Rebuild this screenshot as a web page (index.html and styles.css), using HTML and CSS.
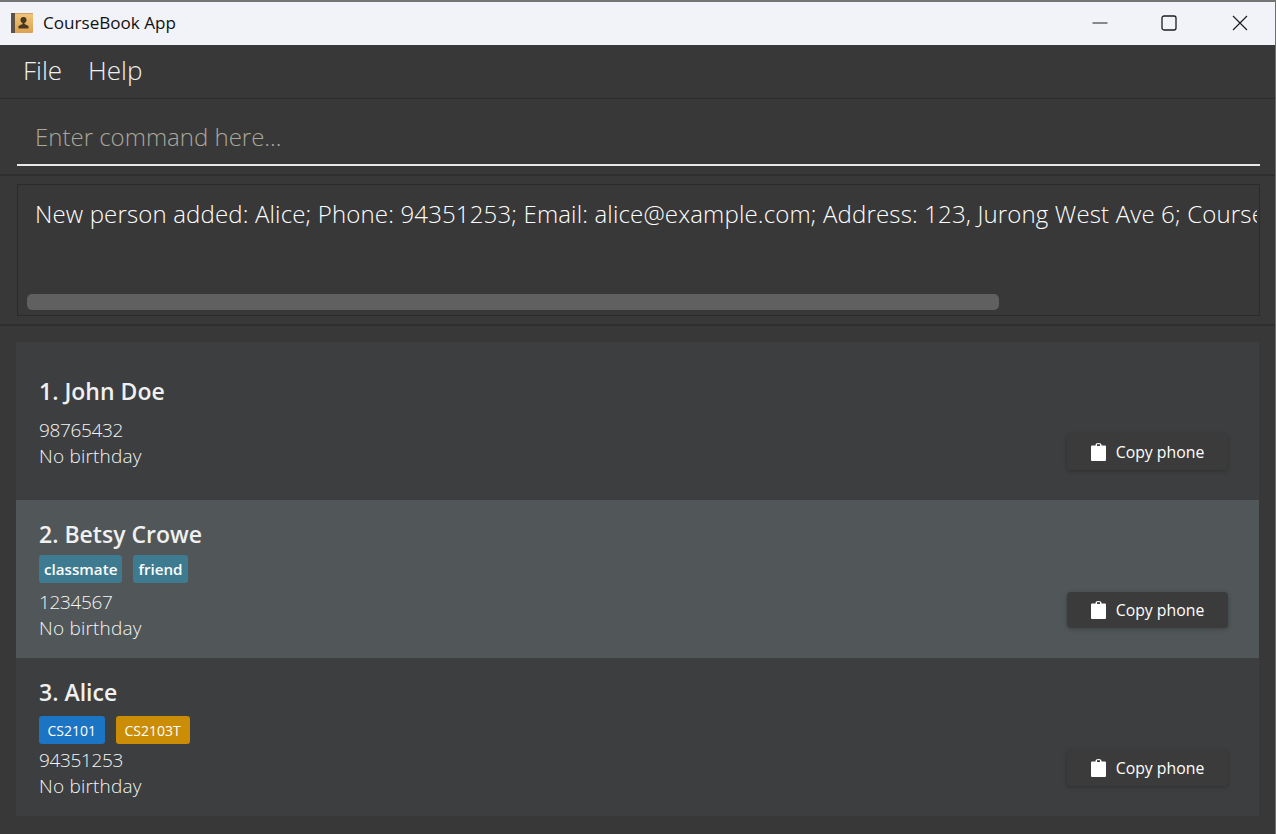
FILE: index.html
```html
<!DOCTYPE html>
<html lang="en">
    <head>
        <meta charset="UTF-8" />
        <title>CourseBook App</title>
        <link rel="stylesheet" href="styles.css">
    </head>
    <body>
        <div class="window">
            <div class="title-bar">
                <svg class="app-icon" width="22" height="22" viewBox="0 0 22 22">
                    <defs>
                        <linearGradient id="bookFill" x1="0" y1="0" x2="0" y2="1">
                            <stop offset="0" stop-color="#f0c67c" />
                            <stop offset="1" stop-color="#dba24f" />
                        </linearGradient>
                    </defs>
                    <rect x="0" y="1" width="22" height="20" rx="1" fill="url(#bookFill)" />
                    <rect x="0" y="1" width="4" height="20" fill="#5f5244" />
                    <rect x="4" y="1" width="18" height="1" fill="#c9a066" />
                    <circle cx="12.500" cy="8" r="3" fill="#4a3720" />
                    <path d="M11.500 10h2v2l4 2v2.500h-10V14l4-2z" fill="#4a3720" />
                </svg>
                <span class="app-title">CourseBook App</span>
                <div class="window-buttons">
                    <svg width="16" height="16" viewBox="0 0 16 16"><path d="M0.5 8h15" stroke="#1c1c1c" fill="none" /></svg>
                    <svg width="16" height="16" viewBox="0 0 16 16"><rect x="1" y="1" width="14" height="14" rx="2" stroke="#1c1c1c" stroke-width="1.3" fill="none" /></svg>
                    <svg class="close-icon" width="16" height="16" viewBox="0 0 16 16"><path d="M1 1l14 14M15 1L1 15" stroke="#1c1c1c" stroke-width="1.2" fill="none" /></svg>
                </div>
            </div>

            <div class="menu-bar">
                <span>File</span>
                <span>Help</span>
            </div>

            <div class="command-section">
                <div class="command-box">Enter command here...</div>
            </div>

            <div class="result-section">
                <div class="result-box">
                    <div class="result-text">New person added: Alice; Phone: 94351253; Email: alice@example.com; Address: 123, Jurong West Ave 6; Courses: CS2101, CS2103T</div>
                    <div class="scroll-thumb"></div>
                </div>
            </div>

            <div class="list-section">
                <div class="person-card">
                    <div class="person-info">
                        <div class="person-name no-tags">1. John Doe</div>
                        <div class="person-line person-phone">98765432</div>
                        <div class="person-line">No birthday</div>
                    </div>
                    <button class="copy-button">
                        <svg width="15" height="18" viewBox="0 0 15 18"><path d="M1 2.500H4.500V2a3 2 0 0 1 6 0v.5H14a1 1 0 0 1 1 1V17a1 1 0 0 1-1 1H1a1 1 0 0 1-1-1V3.500a1 1 0 0 1 1-1z" fill="#fff" /><rect x="6" y="1.200" width="3" height="1.800" fill="#3b3b3b" /></svg>
                        Copy phone
                    </button>
                </div>
                <div class="person-card selected">
                    <div class="person-info">
                        <div class="person-name">2. Betsy Crowe</div>
                        <div class="tags">
                            <span class="tag tag-plain">classmate</span>
                            <span class="tag tag-plain">friend</span>
                        </div>
                        <div class="person-line person-phone">1234567</div>
                        <div class="person-line">No birthday</div>
                    </div>
                    <button class="copy-button">
                        <svg width="15" height="18" viewBox="0 0 15 18"><path d="M1 2.500H4.500V2a3 2 0 0 1 6 0v.5H14a1 1 0 0 1 1 1V17a1 1 0 0 1-1 1H1a1 1 0 0 1-1-1V3.500a1 1 0 0 1 1-1z" fill="#fff" /><rect x="6" y="1.200" width="3" height="1.800" fill="#3b3b3b" /></svg>
                        Copy phone
                    </button>
                </div>
                <div class="person-card">
                    <div class="person-info">
                        <div class="person-name">3. Alice</div>
                        <div class="tags tags-course">
                            <span class="tag tag-blue">CS2101</span>
                            <span class="tag tag-gold">CS2103T</span>
                        </div>
                        <div class="person-line person-phone">94351253</div>
                        <div class="person-line">No birthday</div>
                    </div>
                    <button class="copy-button">
                        <svg width="15" height="18" viewBox="0 0 15 18"><path d="M1 2.500H4.500V2a3 2 0 0 1 6 0v.5H14a1 1 0 0 1 1 1V17a1 1 0 0 1-1 1H1a1 1 0 0 1-1-1V3.500a1 1 0 0 1 1-1z" fill="#fff" /><rect x="6" y="1.200" width="3" height="1.800" fill="#3b3b3b" /></svg>
                        Copy phone
                    </button>
                </div>
            </div>
        </div>
    </body>
</html>
```

FILE: styles.css
```css
* {
    box-sizing: border-box;
    font-family: "Open Sans", "Noto Sans", sans-serif;
}
html,
body {
    margin: 0;
    height: 100%;
    overflow: hidden;
}
.window {
    height: 834px;
    display: flex;
    flex-direction: column;
    background-color: #383838;
    border-right: 1px solid #6f6f6f;
}
.title-bar {
    height: 45px;
    flex: none;
    display: flex;
    align-items: center;
    padding-left: 11px;
    padding-bottom: 2px;
    background-color: #f2f3f9;
    border-top: 2px solid #757575;
}
.app-icon {
    margin-right: 10px;
}
.app-title {
    font-size: 17.100px;
    color: #111;
}
.window-buttons {
    margin-left: auto;
    display: flex;
    gap: 53px;
    padding-right: 27px;
}
.close-icon {
    margin-left: 2px;
}
.menu-bar {
    height: 54px;
    flex: none;
    display: flex;
    align-items: center;
    gap: 26px;
    padding-left: 23px;
    padding-bottom: 4px;
    font-size: 26px;
    font-weight: 300;
    color: #f0f0f0;
    border-bottom: 1px solid #2c2c2c;
}
.command-section {
    height: 77px;
    flex: none;
    padding: 0 15px 0 17px;
    border-bottom: 2px solid #2e2e2e;
}
.command-box {
    height: 67px;
    padding: 21px 0 0 18px;
    font-size: 24px;
    font-weight: 300;
    color: #aaa79b;
    border-bottom: 2px solid #e8e8e8;
}
.result-section {
    height: 150px;
    flex: none;
    padding: 8px 15px 0 17px;
    border-bottom: 2px solid #2e2e2e;
}
.result-box {
    position: relative;
    height: 132px;
    padding: 12px 2px 0 17px;
    overflow: hidden;
    border: 1px solid #2b2b2b;
}
.result-text {
    font-size: 24px;
    letter-spacing: 0.15px;
    font-weight: 300;
    color: #fff;
    white-space: nowrap;
    overflow: hidden;
}
/* Scrollbar thumb sits over the text area */
.scroll-thumb {
    position: absolute;
    left: 9px;
    top: 109px;
    width: 972px;
    height: 16px;
    border-radius: 5px;
    background-color: #606060;
}
.list-section {
    padding: 16px 16px 0;
}
.person-card {
    height: 158px;
    padding: 3px 31px 0 23px;
    display: flex;
    justify-content: space-between;
    background-color: #3c3e3f;
}
.person-card.selected {
    background-color: #515658;
}
.person-info {
    display: flex;
    flex-direction: column;
    justify-content: center;
}
.person-name {
    height: 31px;
    font-size: 23px;
    line-height: 29px;
    font-weight: 600;
    color: #f0f0f0;
}
.person-name.no-tags {
    margin-bottom: 9px;
}
.tags {
    display: flex;
    gap: 11px;
    height: 28px;
    margin: 4px 0 6px;
}
.tags-course {
    margin: 7px 0 3px;
}
.tag {
    height: 28px;
    padding: 0 5px;
    display: flex;
    align-items: center;
    border-radius: 3px;
    font-size: 15.200px;
    font-weight: 600;
    color: #fff;
}
.tag-plain {
    background-color: #3e7b91;
}
.tag-blue {
    padding: 0 8.500px;
    font-weight: 400;
    font-size: 14px;
    background-color: #1b74c4;
}
.tag-gold {
    padding: 0 9px;
    font-weight: 400;
    font-size: 14px;
    background-color: #cb8d05;
}
.person-line {
    height: 26px;
    font-size: 19px;
    letter-spacing: 0.2px;
    font-weight: 300;
    color: #f5f5f5;
}
.person-phone {
    letter-spacing: -0.35px;
}
.copy-button {
    align-self: flex-end;
    width: 161px;
    height: 36px;
    margin-bottom: 30px;
    display: flex;
    align-items: center;
    justify-content: center;
    gap: 10px;
    border: none;
    border-radius: 4px;
    font-size: 15.800px;
    color: #fff;
    background-color: #3b3b3b;
    box-shadow: 0 1px 4px rgba(0, 0, 0, 0.25);
}
```
